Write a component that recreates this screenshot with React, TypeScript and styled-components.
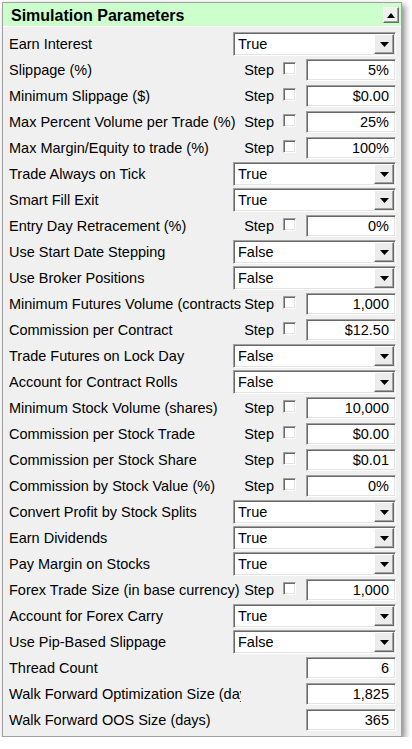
import React from 'react';
import styled, { createGlobalStyle } from 'styled-components';

const GlobalStyle = createGlobalStyle`
  html, body {
    margin: 0;
    padding: 0;
    background: #ffffff;
  }
  body {
    font-family: 'Liberation Sans', Arial, sans-serif;
    color: #000000;
  }
`;

const Page = styled.div`
  padding: 2px 0 0 2px;
`;

const Panel = styled.div`
  width: 398px;
  border: 1px solid #a0a0a0;
  background: #f0f0f0;
  box-shadow: 3px 3px 6px rgba(0, 0, 0, 0.45);
`;

const Header = styled.div`
  height: 23px;
  display: flex;
  align-items: flex-start;
  justify-content: space-between;
  background: #ccffcc;
  border-bottom: 1px solid #ffffff;
`;

const Title = styled.div`
  padding: 3px 0 0 8px;
  font-size: 16px;
  font-weight: bold;
  line-height: 19px;
`;

const CollapseButton = styled.div`
  width: 14px;
  height: 14px;
  margin: 4px 2px 0 0;
  display: flex;
  align-items: center;
  justify-content: center;
  background: #f0f0f0;
  border: 1px solid;
  border-color: #ffffff #696969 #696969 #ffffff;
  box-shadow: inset -1px -1px #a0a0a0;
`;

const Rows = styled.div`
  padding: 4px 5px 3px 6px;
`;

const Row = styled.div`
  height: 26px;
  display: grid;
  grid-template-columns: 232px 1fr;
  align-items: center;
`;

const Label = styled.div`
  font-size: 14.5px;
  line-height: 26px;
  white-space: nowrap;
  overflow: hidden;
`;

const Controls = styled.div`
  display: flex;
  align-items: center;
  justify-content: flex-end;
  height: 26px;
`;

const Combo = styled.div`
  margin-left: -8px;
  flex: 1;
  height: 20px;
  display: flex;
  align-items: center;
  justify-content: space-between;
  background: #ffffff;
  border: 1px solid;
  border-color: #a0a0a0 #ffffff #ffffff #a0a0a0;
  box-shadow: inset 1px 1px #696969, inset -1px -1px #e3e3e3;
  padding: 1px 1px 1px 2px;
`;

const ComboValue = styled.span`
  font-size: 14.5px;
  line-height: 20px;
  padding-left: 2px;
`;

const DropButton = styled.div`
  width: 18px;
  height: 18px;
  display: flex;
  align-items: center;
  justify-content: center;
  background: #ececec;
  border: 1px solid;
  border-color: #ffffff #696969 #696969 #ffffff;
  box-shadow: inset -1px -1px #a0a0a0;
`;

const StepLabel = styled.span`
  font-size: 14.5px;
  margin-right: 9px;
`;

const CheckBox = styled.div`
  width: 11px;
  height: 11px;
  margin: 0 10px 3px 0;
  background: #ffffff;
  border: 1px solid;
  border-color: #a0a0a0 #ffffff #ffffff #a0a0a0;
  box-shadow: inset 1px 1px #696969, inset -1px -1px #e3e3e3;
`;

const NumberField = styled.div`
  width: 82px;
  height: 20px;
  padding: 0 6px 0 0;
  text-align: right;
  font-size: 14.5px;
  line-height: 20px;
  background: #ffffff;
  border: 1px solid;
  border-color: #a0a0a0 #ffffff #ffffff #a0a0a0;
  box-shadow: inset 1px 1px #696969, inset -1px -1px #e3e3e3;
`;

const Arrow = ({ up, w, h }: { up?: boolean; w: number; h: number }) => (
  <svg width={w} height={h} viewBox={`0 0 ${w} ${h}`}>
    <polygon
      points={up ? `0,${h} ${w},${h} ${w / 2},0` : `0,0 ${w},0 ${w / 2},${h}`}
      fill="#000"
    />
  </svg>
);

type Param = { label: string; kind: 'combo' | 'step' | 'number'; value: string };

const params: Param[] = [
  { label: 'Earn Interest', kind: 'combo', value: 'True' },
  { label: 'Slippage (%)', kind: 'step', value: '5%' },
  { label: 'Minimum Slippage ($)', kind: 'step', value: '$0.00' },
  { label: 'Max Percent Volume per Trade (%)', kind: 'step', value: '25%' },
  { label: 'Max Margin/Equity to trade (%)', kind: 'step', value: '100%' },
  { label: 'Trade Always on Tick', kind: 'combo', value: 'True' },
  { label: 'Smart Fill Exit', kind: 'combo', value: 'True' },
  { label: 'Entry Day Retracement (%)', kind: 'step', value: '0%' },
  { label: 'Use Start Date Stepping', kind: 'combo', value: 'False' },
  { label: 'Use Broker Positions', kind: 'combo', value: 'False' },
  { label: 'Minimum Futures Volume (contracts)', kind: 'step', value: '1,000' },
  { label: 'Commission per Contract', kind: 'step', value: '$12.50' },
  { label: 'Trade Futures on Lock Day', kind: 'combo', value: 'False' },
  { label: 'Account for Contract Rolls', kind: 'combo', value: 'False' },
  { label: 'Minimum Stock Volume (shares)', kind: 'step', value: '10,000' },
  { label: 'Commission per Stock Trade', kind: 'step', value: '$0.00' },
  { label: 'Commission per Stock Share', kind: 'step', value: '$0.01' },
  { label: 'Commission by Stock Value (%)', kind: 'step', value: '0%' },
  { label: 'Convert Profit by Stock Splits', kind: 'combo', value: 'True' },
  { label: 'Earn Dividends', kind: 'combo', value: 'True' },
  { label: 'Pay Margin on Stocks', kind: 'combo', value: 'True' },
  { label: 'Forex Trade Size (in base currency)', kind: 'step', value: '1,000' },
  { label: 'Account for Forex Carry', kind: 'combo', value: 'True' },
  { label: 'Use Pip-Based Slippage', kind: 'combo', value: 'False' },
  { label: 'Thread Count', kind: 'number', value: '6' },
  { label: 'Walk Forward Optimization Size (days)', kind: 'number', value: '1,825' },
  { label: 'Walk Forward OOS Size (days)', kind: 'number', value: '365' },
];

const ParamControl = ({ param }: { param: Param }) => {
  if (param.kind === 'combo') {
    return (
      <Combo>
        <ComboValue>{param.value}</ComboValue>
        <DropButton>
          <Arrow w={9} h={5} />
        </DropButton>
      </Combo>
    );
  }
  return (
    <>
      {param.kind === 'step' && (
        <>
          <StepLabel>Step</StepLabel>
          <CheckBox />
        </>
      )}
      <NumberField>{param.value}</NumberField>
    </>
  );
};

const App: React.FC = () => (
  <Page>
    <GlobalStyle />
    <Panel>
      <Header>
        <Title>Simulation Parameters</Title>
        <CollapseButton>
          <Arrow up w={8} h={5} />
        </CollapseButton>
      </Header>
      <Rows>
        {params.map((p) => (
          <Row key={p.label}>
            <Label>{p.label}</Label>
            <Controls>
              <ParamControl param={p} />
            </Controls>
          </Row>
        ))}
      </Rows>
    </Panel>
  </Page>
);

export default App;
